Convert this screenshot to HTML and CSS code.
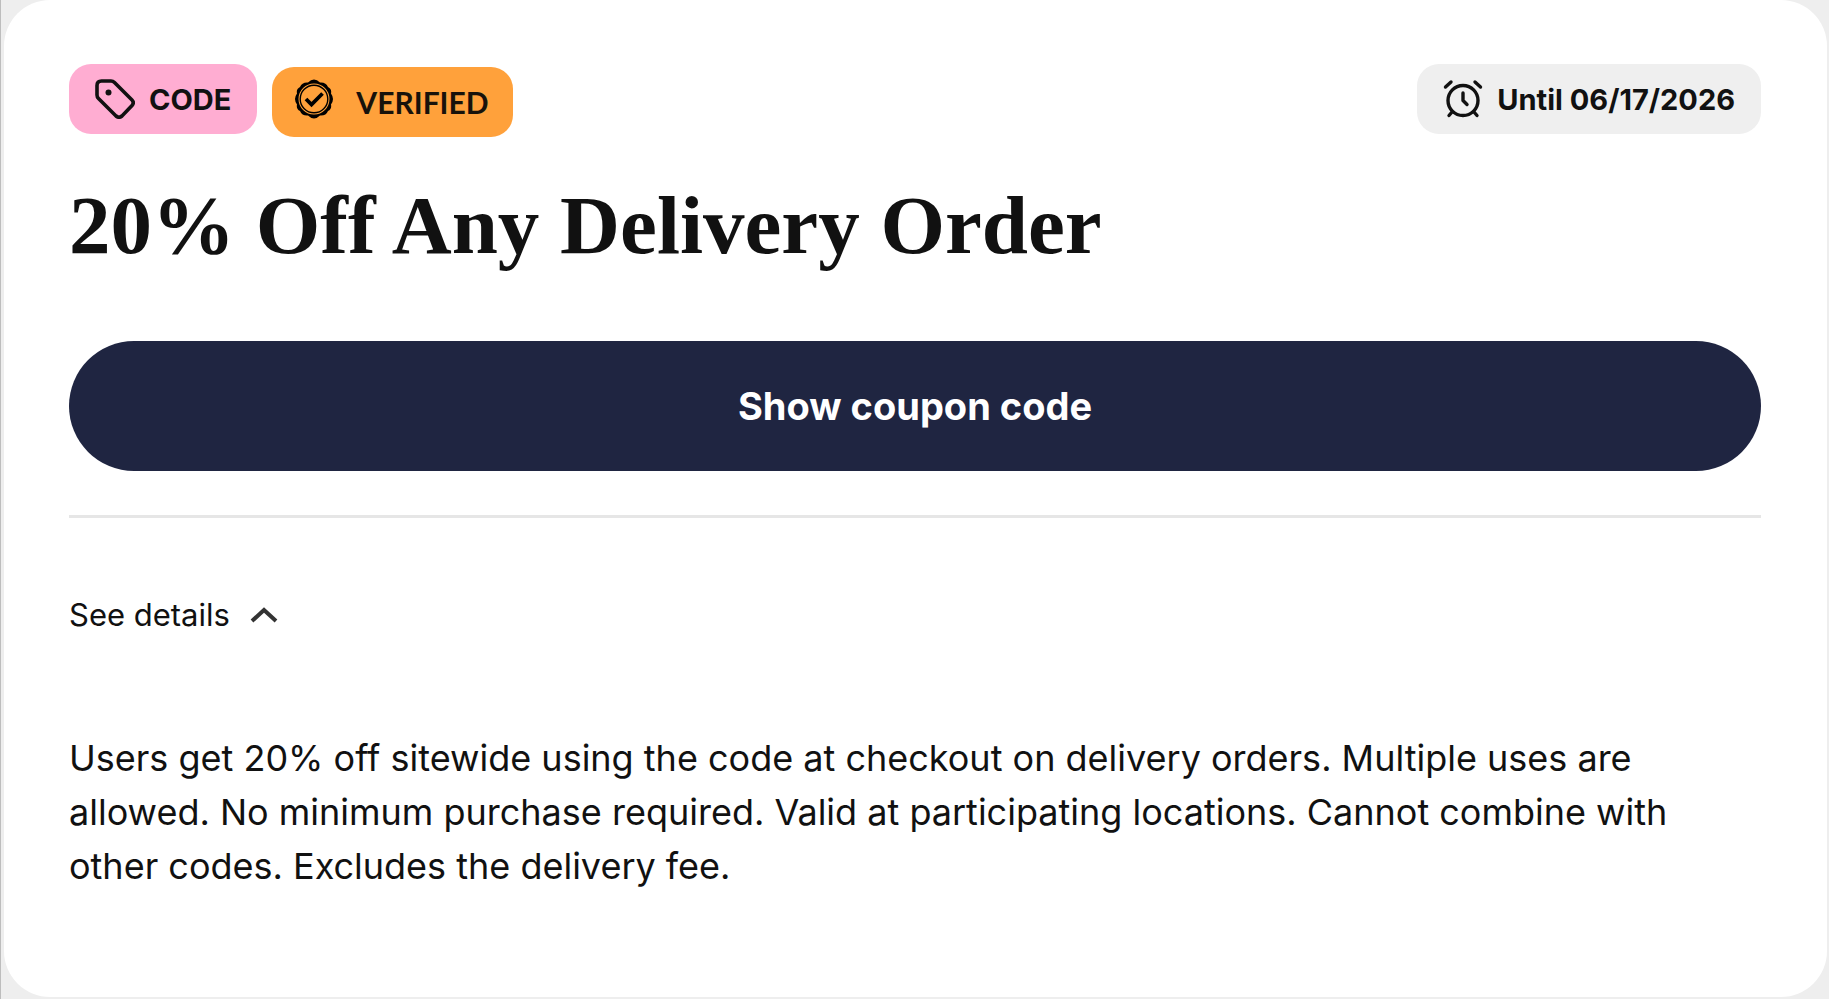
FILE: index.html
```
<!DOCTYPE html>
<html lang="en">
<head>
    <meta charset="UTF-8">
    <meta name="viewport" content="width=device-width, initial-scale=1.0">
    <title>20% Off Any Delivery Order</title>
    <link rel="stylesheet" href="styles.css">
</head>
<body>
    <article class="coupon-card">
        <div class="coupon-header">
            <div class="badge badge-code">
                <svg class="icon" viewBox="0 0 40 40" aria-hidden="true">
                    <path d="M6.500 2H16Q18 2 19.500 3.500L37 21Q39.500 23.500 37 26.500L27 37Q24 39.500 21 37L3.500 19.500Q2 18 2 16V6.500Q2 2 6.500 2Z" fill="none" stroke="currentColor" stroke-width="3.600"/>
                    <circle cx="13.500" cy="13.500" r="3" fill="currentColor"/>
                </svg>
                <span>CODE</span>
            </div>
            <div class="badge badge-verified">
                <svg class="icon" viewBox="0 0 40 40" aria-hidden="true">
                    <path d="M20 .5Q23 .5 26 3.500Q32 3 34 8Q38 10 37 14.500Q41 20 37 25.500Q38 30 34 32Q32 37 26 36.500Q23 39.500 20 39.500Q17 39.500 14 36.500Q8 37 6 32Q2 30 3 25.500Q-1 20 3 14.500Q2 10 6 8Q8 3 14 3.500Q17 .5 20 .5ZM20 4.500A15.500 15.500 0 1 0 20 35.500A15.500 15.500 0 1 0 20 4.500Z" fill="currentColor" fill-rule="evenodd"/>
                    <circle cx="20" cy="20" r="13.800" fill="none" stroke="currentColor" stroke-width="1.400"/>
                    <path d="M12 20L17.500 25.500L28.500 14.500" fill="none" stroke="currentColor" stroke-width="3.800"/>
                </svg>
                <span>VERIFIED</span>
            </div>
            <div class="badge badge-date">
                <svg class="icon" viewBox="0 0 40 40" aria-hidden="true">
                    <g fill="none" stroke="currentColor" stroke-width="3.400" stroke-linecap="round" stroke-linejoin="round">
                        <circle cx="20" cy="21.500" r="15"/>
                        <path d="M20 14V21.500L24 25.500M2.500 8L8 3M32 3L37.500 8M9 33L6 36.500M31 33L34 36.500"/>
                    </g>
                </svg>
                <span>Until 06/17/2026</span>
            </div>
        </div>
        <h2 class="coupon-title">20% Off Any Delivery Order</h2>
        <button type="button" class="show-code">Show coupon code</button>
        <details class="coupon-details" open>
            <summary>
                <span>See details</span>
                <svg class="chevron" viewBox="0 0 28 16" aria-hidden="true">
                    <path d="M2 14L14 3L26 14" fill="none" stroke="currentColor" stroke-width="4"/>
                </svg>
            </summary>
            <p>Users get 20% off sitewide using the code at checkout on delivery orders. Multiple uses are allowed. No minimum purchase required. Valid at participating locations. Cannot combine with other codes. Excludes the delivery fee.</p>
        </details>
    </article>
</body>
</html>
```

FILE: styles.css
```
* {
    box-sizing: border-box;
}
body {
    font-family: Inter, "Liberation Sans", sans-serif;
    margin: 0;
    min-height: 100vh;
    padding: 0 2px 2px 3px;
    background-color: #eeeeee;
    border-left: 1px solid #bdbdbd;
    color: #111111;
}
.coupon-card {
    background-color: white;
    border-radius: 46px;
    padding: 64px 66px 104px 65px;
}
.coupon-header {
    display: flex;
    align-items: flex-start;
    gap: 15px;
}
.badge {
    display: flex;
    align-items: center;
    height: 70px;
    padding: 0 26px;
    border-radius: 22px;
    font-size: 29px;
    font-weight: 700;
    white-space: nowrap;
}
.icon {
    width: 40px;
    height: 40px;
    margin-right: 14px;
    flex-shrink: 0;
}
.badge-code {
    background-color: #ffadd2;
}
.badge-verified {
    margin-top: 3px;
    padding: 0 24px 0 22px;
    background-color: #ffa13b;
    color: #18120b;
    font-family: Lato, sans-serif;
    font-size: 30px;
}
.badge-verified .icon {
    margin-right: 22px;
    margin-bottom: 6px;
    color: black;
}
.badge-date {
    margin-left: auto;
    background-color: #efefef;
}
.coupon-title {
    margin: 40px 0 67px;
    font-family: "Liberation Serif", serif;
    font-size: 83px;
    font-weight: 700;
    line-height: 97px;
}
.show-code {
    display: block;
    width: 100%;
    height: 130px;
    border: none;
    border-radius: 65px;
    background-color: #1f2541;
    color: white;
    font-family: inherit;
    font-size: 38px;
    font-weight: 700;
    cursor: pointer;
}
.coupon-details {
    margin-top: 44px;
    padding-top: 75px;
    border-top: 3px solid #e6e6e6;
}
.coupon-details summary {
    display: flex;
    align-items: center;
    gap: 20px;
    font-size: 31px;
    line-height: 44px;
    list-style: none;
    cursor: pointer;
}
.chevron {
    width: 28px;
    height: 16px;
    color: #333333;
}
.coupon-details:not([open]) .chevron {
    transform: rotate(180deg);
}
.coupon-details p {
    margin: 94px 0 0;
    font-size: 36px;
    line-height: 54px;
}
```
